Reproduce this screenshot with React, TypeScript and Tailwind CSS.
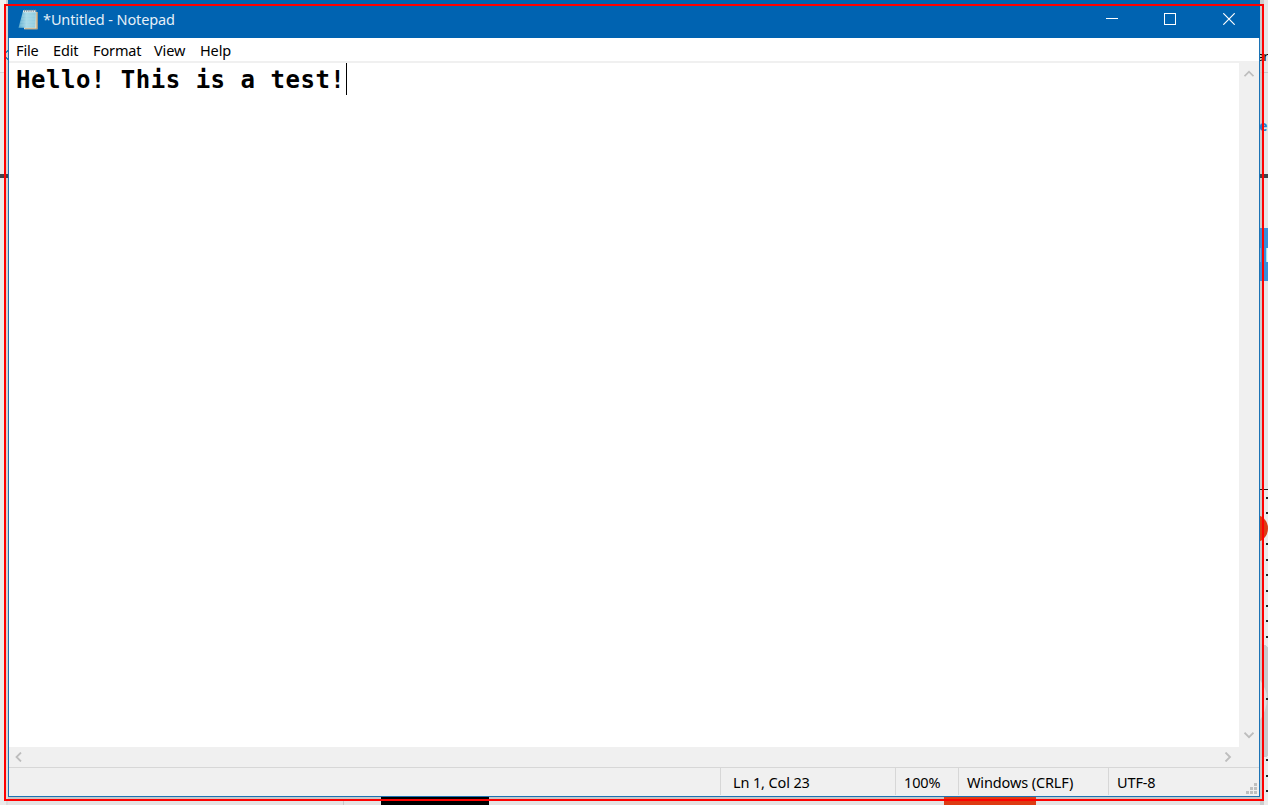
import React from "react";

const menus = [
  { label: "File", width: "w-[37px]" },
  { label: "Edit", width: "w-[40px]" },
  { label: "Format", width: "w-[61px]" },
  { label: "View", width: "w-[46px]" },
  { label: "Help", width: "w-[40px]" },
];

const rulerDots = [497, 512, 543, 559, 574, 590, 605, 620, 636, 698, 759, 775, 790];

function Desktop() {
  return (
    <svg className="absolute inset-0" width="1268" height="805" shapeRendering="crispEdges">
      <rect width="1268" height="805" fill="#ebebeb" />
      <rect x="0" y="0" width="8" height="72" fill="#f1f1f1" />
      <rect x="6" y="0" width="2" height="805" fill="#d2d2d2" />
      <rect x="0" y="72" width="8" height="1" fill="#d4d4d4" />
      <rect x="1260" y="0" width="4" height="805" fill="#cccccc" />
      <rect x="1264" y="0" width="4" height="490" fill="#e6e6e6" />
      <rect x="1260" y="72" width="8" height="1" fill="#c8c8c8" />
      <circle cx="9" cy="55" r="4" fill="none" stroke="#2585ae" strokeWidth="2" />
      <rect x="0" y="174" width="8" height="4" fill="#404349" />
      <rect x="1260" y="174" width="8" height="4" fill="#404349" />
      <rect x="1260" y="228" width="8" height="53" fill="#3a8fd9" />
      <rect x="1260" y="248" width="1" height="14" fill="#69afe1" />
      <rect x="1266" y="248" width="1" height="14" fill="#a4e2ef" />
      <rect x="1267" y="248" width="1" height="14" fill="#e8f8fb" />
      <rect x="1260" y="489" width="8" height="1" fill="#151515" />
      <circle cx="1254" cy="528.5" r="14" fill="#dc3b12" shapeRendering="auto" />
      <path d="M1260 644Q1265 644 1268 647V756Q1264 758 1260 758Z" fill="#c8cacb" />
      <path d="M1260 680Q1267 690 1267 698Q1267 710 1260 720Z" fill="#dedfdf" shapeRendering="auto" />
      {rulerDots.map((y) => (
        <rect key={y} x="1266" y={y} width="2" height="1.5" fill="#222" />
      ))}
      <rect x="8" y="797" width="1252" height="2" fill="#c7c7c7" />
      <rect x="8" y="801" width="1252" height="4" fill="#e3e3e3" />
      <rect x="343" y="797" width="1" height="8" fill="#c8c8c8" />
      <rect x="6" y="760" width="2" height="45" fill="#dcdcdc" />
      <rect x="381" y="797" width="108" height="8" fill="#000" />
      <rect x="944" y="797" width="92" height="8" fill="#dd3b13" />
    </svg>
  );
}

function NotepadIcon() {
  return (
    <svg width="20" height="21" viewBox="0 0 20 21" className="shrink-0">
      <defs>
        <linearGradient id="page" x1="0" y1="0" x2="1" y2="0">
          <stop stopColor="#5aa9cc" />
          <stop offset=".45" stopColor="#a9dae8" />
          <stop offset="1" stopColor="#8fccdf" />
        </linearGradient>
      </defs>
      <path d="M7 3H19.5V20.3H6Z" fill="#e6dfc6" />
      <path d="M18.5 3H19.6V20.3H7V19.5H18.5Z" fill="#b8986a" />
      <path d="M5 2H18L17.2 18.8H.5Z" fill="url(#page)" />
      <path d="M4 7H17.5M3.5 10H17.3M2.5 13H17M2 16H17" stroke="#b5e0eb" strokeWidth=".4" />
      <path d="M5 2.3H18.2" stroke="#e8eeee" strokeWidth="2" />
      <path d="M6.5 .5V3M8.7 .5V3M10.9 .5V3M13.1 .5V3M15.3 .5V3M17.5 .5V3" stroke="#6b828b" strokeWidth=".7" />
    </svg>
  );
}

function WindowControls() {
  return (
    <div className="ml-auto mr-px flex h-[38px] shrink-0 text-white">
      <button aria-label="Minimize" className="flex w-[58px] items-center justify-center">
        <svg width="12" height="12"><path d="M0 5.5H12" stroke="currentColor" /></svg>
      </button>
      <button aria-label="Maximize" className="flex w-[58px] items-center justify-center">
        <svg width="12" height="12"><rect x=".5" y=".5" width="11" height="11" fill="none" stroke="currentColor" /></svg>
      </button>
      <button aria-label="Close" className="flex w-[60px] items-center justify-center">
        <svg width="12" height="12"><path d="M.3 .3L11.7 11.7M11.7 .3L.3 11.7" stroke="currentColor" strokeWidth="1.2" /></svg>
      </button>
    </div>
  );
}

const arrows = {
  up: "M.5 7.2L5 2.7L9.5 7.2",
  down: "M.5 2.7L5 7.2L9.5 2.7",
  left: "M7 .5L2.5 5L7 9.5",
  right: "M2.5 .5L7 5L2.5 9.5",
};

function Arrow({ direction }: { direction: keyof typeof arrows }) {
  return (
    <svg width="10" height="10" className="shrink-0">
      <path d={arrows[direction]} fill="none" stroke="#bdbdbd" strokeWidth="1.8" />
    </svg>
  );
}

export default function App() {
  return (
    <main className="relative h-[805px] w-[1268px] overflow-hidden font-['Noto_Sans',sans-serif] text-black">
      <Desktop />
      <span className="absolute left-[1257px] top-[46px] text-[13px] leading-5 tracking-[-1px]">ar</span>
      <span className="absolute left-[1259px] top-[116px] text-[14px] font-bold leading-5 text-[#2482cf]">e</span>

      <section className="relative ml-2 flex h-[797px] w-[1252px] flex-col border-x border-b border-[#1c73b5] bg-white">
        <header className="-mx-px flex h-[38px] shrink-0 items-center bg-[#0063b1] pl-2.5">
          <NotepadIcon />
          <h1 className="ml-[5px] whitespace-nowrap text-[14.5px] leading-5 tracking-[-0.11px] text-[#e6f0f8]">*Untitled - Notepad</h1>
          <WindowControls />
        </header>
        <nav className="flex h-[25px] shrink-0 items-center border-b-2 border-[#f0f0f0] pl-[7px] pt-px text-[14.5px] leading-5 tracking-[-0.13px]">
          {menus.map((menu) => (
            <button key={menu.label} className={`${menu.width} shrink-0 whitespace-nowrap text-left`}>{menu.label}</button>
          ))}
        </nav>
        <div className="flex h-[684px] shrink-0">
          <div className="flex flex-1 items-start pl-1.5">
            <p className="w-[331px] whitespace-pre pl-px pt-px font-['DejaVu_Sans_Mono',monospace] text-[24px] font-bold leading-8 tracking-[0.52px]">Hello! This is a test!</p>
            <span className="h-8 w-px bg-black" />
          </div>
          <div className="flex w-5 flex-col items-center justify-between bg-[#f0f0f0] pb-[7px] pr-px pt-1.5">
            <Arrow direction="up" />
            <Arrow direction="down" />
          </div>
        </div>
        <div className="flex h-5 shrink-0 items-center justify-between bg-[#f0f0f0] pl-[5px] pr-[26px]">
          <Arrow direction="left" />
          <Arrow direction="right" />
        </div>
        <footer className="flex h-[29px] shrink-0 border-t border-[#d7d7d7] bg-[#f0f0f0] pb-px text-[14.5px] leading-[29px] tracking-[-0.13px]">
          <div className="w-[711px]" />
          <div className="w-[175px] border-l border-[#d7d7d7] pl-3">Ln 1, Col 23</div>
          <div className="w-[63px] border-l border-[#d7d7d7] pl-2">100%</div>
          <div className="w-[150px] border-l border-[#d7d7d7] pl-2">Windows (CRLF)</div>
          <div className="flex flex-1 justify-between border-l border-[#d7d7d7] pl-2 pr-0.5">
            <span>UTF-8</span>
            <svg width="11" height="11" className="mt-[15px]" fill="#bfbfbf">
              <path d="M8 0h3v3H8zM4 4h3v3H4zM8 4h3v3H8zM0 8h3v3H0zM4 8h3v3H4zM8 8h3v3H8z" />
            </svg>
          </div>
        </footer>
      </section>

      <div className="pointer-events-none absolute left-1 top-1 h-[797px] w-[1260px] border-2 border-[#ff0000]" />
    </main>
  );
}
